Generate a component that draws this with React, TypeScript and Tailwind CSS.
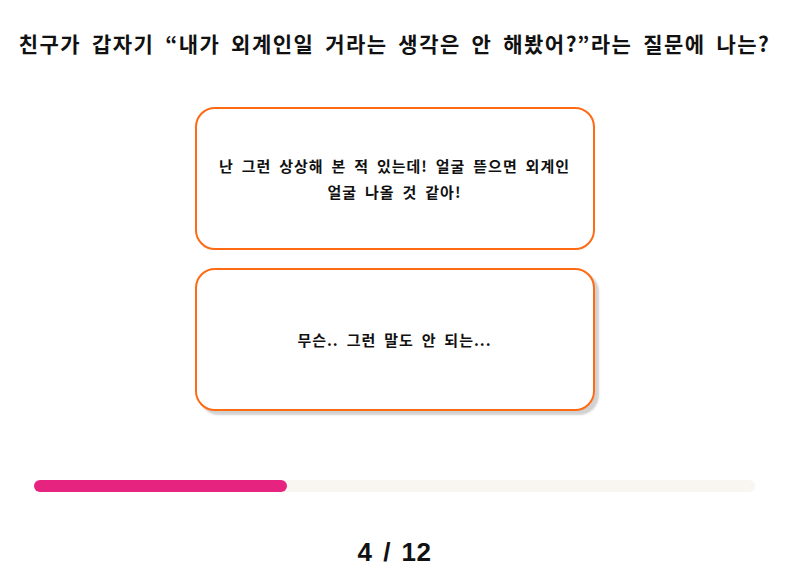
const options = [
  "난 그런 상상해 본 적 있는데! 얼굴 뜯으면 외계인 얼굴 나올 것 같아!",
  "무슨.. 그런 말도 안 되는...",
];

export default function App() {
  const current = 4;
  const total = 12;
  return (
    <div className="w-[789px] h-[585px] bg-white flex flex-col items-center font-['Noto_Sans_CJK_KR','Noto_Sans',sans-serif] text-[#111]">
      <h1 className="mt-[28px] text-[21px] leading-[30px] font-bold tracking-[1.5px] [word-spacing:4.5px] whitespace-nowrap">
        친구가 갑자기 “내가 외계인일 거라는 생각은 안 해봤어?”라는 질문에 나는?
      </h1>

      <div className="mt-[49px] flex flex-col gap-[18px]">
        {options.map((o, i) => (
          <button
            key={i}
            className={`w-[400px] h-[143px] rounded-[20px] border-2 border-[#ff6a14] bg-white px-[20px] flex items-center justify-center text-center text-[15px] leading-[26px] font-bold tracking-[1px] [word-spacing:3.5px] ${
              i === 1 ? "shadow-[4px_4px_2px_rgba(0,0,0,0.18)]" : ""
            }`}
          >
            {o}
          </button>
        ))}
      </div>

      <div className="mt-[69px] w-[721px] h-[12px] rounded-full bg-[#f9f6f2]">
        <div className="h-full rounded-full bg-[#e6247f]" style={{ width: `${(253 / 721) * 100}%` }} />
      </div>

      <div className="mt-[45px] text-[26px] leading-[30px] font-bold font-['Liberation_Sans',sans-serif] tracking-[0.5px] [word-spacing:3px]">
        {current} / {total}
      </div>
    </div>
  );
}
